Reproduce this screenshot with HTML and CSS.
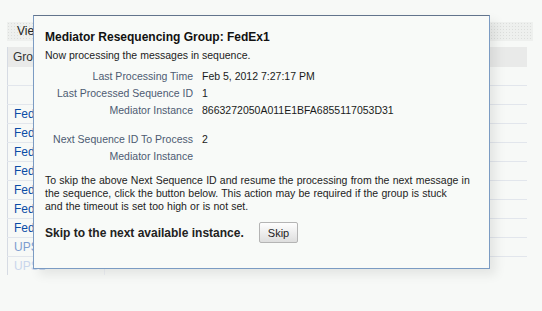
FILE: index.html
```html
<!DOCTYPE html>
<html lang="en">
<head>
  <meta charset="UTF-8" />
  <title>Mediator Resequencing Group</title>
  <link rel="stylesheet" href="styles.css">
</head>
<body>
  <div class="panel">
    <div class="toolbar"><span class="tb-item">View</span></div>
    <table class="groups">
      <thead>
        <tr><th>Group</th><th></th></tr>
      </thead>
      <tbody>
        <tr><td></td><td></td></tr>
        <tr><td></td><td></td></tr>
        <tr><td><a href="#">FedEx1</a></td><td></td></tr>
        <tr><td><a href="#">FedEx2</a></td><td></td></tr>
        <tr><td><a href="#">FedEx3</a></td><td></td></tr>
        <tr><td><a href="#">FedEx4</a></td><td></td></tr>
        <tr><td><a href="#">FedEx5</a></td><td></td></tr>
        <tr><td><a href="#">FedEx6</a></td><td></td></tr>
        <tr><td><a href="#">FedEx7</a></td><td></td></tr>
        <tr class="fade"><td><a href="#">UPS1</a></td><td></td></tr>
        <tr class="fade more"><td><a href="#">UPS2</a></td><td></td></tr>
      </tbody>
    </table>
  </div>

  <div class="popup">
    <h1 class="popup-title">Mediator Resequencing Group: FedEx1</h1>
    <p class="status">Now processing the messages in sequence.</p>

    <div class="details">
      <span class="lbl">Last Processing Time</span><span class="val">Feb 5, 2012 7:27:17 PM</span>
      <span class="lbl">Last Processed Sequence ID</span><span class="val">1</span>
      <span class="lbl">Mediator Instance</span><span class="val">8663272050A011E1BFA6855117053D31</span>
      <span class="lbl gap">Next Sequence ID To Process</span><span class="val gap">2</span>
      <span class="lbl">Mediator Instance</span><span class="val"></span>
    </div>

    <p class="note">To skip the above Next Sequence ID and resume the processing from the next message in the sequence, click the button below. This action may be required if the group is stuck<br>and the timeout is set too high or is not set.</p>

    <div class="skip-row">
      <span class="skip-text">Skip to the next available instance.</span>
      <button class="skip-btn">Skip</button>
    </div>
  </div>
</body>
</html>
```

FILE: styles.css
```css
body {
  margin: 0;
  background-color: #f7f9f7;
  font-family: "Liberation Sans", Arial, sans-serif;
  font-size: 10.5px;
  color: #222;
}

/* background table the popup sits over */
.panel {
  width: 526px;
  margin: 22px 0 0 7px;
}
.toolbar {
  height: 19px;
  background-color: #eef0ee;
  background-image: radial-gradient(#dcdedc 0.6px, transparent 0.8px);
  background-size: 3px 3px;
  line-height: 19px;
  padding-left: 10px;
  font-size: 12px;
}
.groups {
  margin-top: 6px;
  width: 520px;
  border-collapse: collapse;
  border-left: 1px solid #d6dbe3;
}
.groups th {
  height: 20px;
  background-color: #e9eae9;
  text-align: left;
  font-weight: normal;
  padding: 0 0 0 5px;
  font-size: 12px;
  color: #333;
}
.groups td {
  height: 18px;
  border-bottom: 1px solid #e2e6ec;
  padding: 0 0 0 6px;
  font-size: 12px;
}
.groups td:first-child {
  width: 90px;
  border-right: 1px solid #eceff3;
}
.groups a {
  color: #0a4ca6;
  text-decoration: none;
}
.groups .fade a {
  color: #7d9dd0;
}
.groups .fade.more a {
  color: #c9d6ec;
}
.groups .fade.more td {
  border-bottom: none;
}

/* popup */
.popup {
  position: absolute;
  left: 33px;
  top: 15px;
  width: 457px;
  height: 254px;
  box-sizing: border-box;
  background-color: #f8faf8;
  border: 1px solid #7b9bc3;
  border-top-color: #62748c;
  padding: 13px 8px 0 11px;
  box-shadow: 6px 6px 10px rgba(0, 0, 0, 0.08);
}
.popup-title {
  margin: 0;
  font-size: 12px;
  line-height: 16px;
  font-weight: bold;
  color: #111;
}
.status {
  margin: 3px 0 0;
  line-height: 14px;
}
.details {
  display: grid;
  grid-template-columns: 148px 1fr;
  column-gap: 9px;
  margin-top: 6px;
  line-height: 17px;
}
.lbl {
  text-align: right;
  color: #4d5a72;
}
.val {
  color: #1a1a1a;
}
.gap {
  margin-top: 12px;
}
.note {
  margin: 9px 0 0;
  line-height: 13px;
  word-spacing: 0.3px;
}
.skip-row {
  display: flex;
  align-items: center;
  margin-top: 9px;
}
.skip-text {
  font-weight: bold;
  font-size: 12px;
  width: 214px;
}
.skip-btn {
  width: 39px;
  height: 21px;
  padding: 0;
  font-family: inherit;
  font-size: 11px;
  color: #222;
  border: 1px solid #b4b4b4;
  border-radius: 2px;
  background: linear-gradient(#fefefe, #dedede);
}
```
